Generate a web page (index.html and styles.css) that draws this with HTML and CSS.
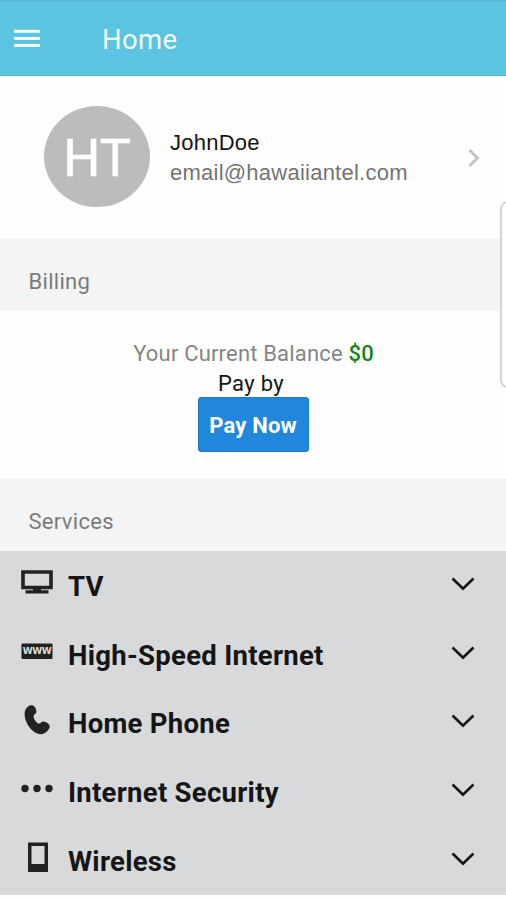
FILE: index.html
```html
<!DOCTYPE html>
<html lang="en">
<head>
<meta charset="utf-8">
<title>Home</title>
<link rel="stylesheet" href="styles.css">
</head>
<body>
<div class="screen">
  <header class="topbar">
    <svg class="menu" width="26" height="19" viewBox="0 0 26 19"><path d="M0 2.300h26M0 9.500h26M0 16.600h26"/></svg>
    <h1 class="title">Home</h1>
  </header>
  <section class="profile">
    <div class="avatar"><span>HT</span></div>
    <div class="identity">
      <div class="name">JohnDoe</div>
      <div class="email">email@hawaiiantel.com</div>
    </div>
    <svg class="next" width="14" height="20" viewBox="0 0 14 20"><path d="M2.500 2l8 8-8 8"/></svg>
  </section>
  <h2 class="section-head"><span>Billing</span></h2>
  <section class="billing">
    <p class="balance">Your Current Balance <span class="amount">$0</span></p>
    <p class="payby">Pay by</p>
    <button class="pay">Pay Now</button>
  </section>
  <h2 class="section-head"><span>Services</span></h2>
  <ul class="services">
    <li class="service">
      <svg class="icon" width="32" height="34" viewBox="0 0 32 34"><path class="line" d="M2 6h28v15.500H2z"/><path d="M12 21.500h8v2.800h7.500v3.200H4.500v-3.200H12z"/></svg>
      <span class="label">TV</span>
      <svg class="chevron" width="24" height="16" viewBox="0 0 24 16"><path d="M1.500 2.500L12 12.700 22.500 2.500"/></svg>
    </li>
    <li class="service">
      <svg class="icon" width="32" height="34" viewBox="0 0 32 34"><rect x="0.500" y="8.500" width="31" height="15.500" rx="1"/><text x="1.800" y="19.400" textLength="29" lengthAdjust="spacing">WWW</text></svg>
      <span class="label">High-Speed Internet</span>
      <svg class="chevron" width="24" height="16" viewBox="0 0 24 16"><path d="M1.500 2.500L12 12.700 22.500 2.500"/></svg>
    </li>
    <li class="service">
      <svg class="icon" width="32" height="34" viewBox="0 0 32 34"><path d="M4.200 6.200C5.400 3.200 8.200 1 11 1.300c2.600.3 4.300 3.500 4.400 6.200.1 2.200-2.700 2.800-2.800 4.600-.1 2.600 2.300 6.400 4.800 7.400 2 .8 2.800-2.200 5-2 2.800.3 6 2.300 6.300 4.800.2 2.500-2.900 5.900-5.700 7.200-3.200 1.400-7.100.3-10-1.800C8.200 24.200 5 18.600 4 13.500c-.5-2.500-.6-5.200.2-7.300z"/></svg>
      <span class="label">Home Phone</span>
      <svg class="chevron" width="24" height="16" viewBox="0 0 24 16"><path d="M1.500 2.500L12 12.700 22.500 2.500"/></svg>
    </li>
    <li class="service">
      <svg class="icon" width="32" height="34" viewBox="0 0 32 34"><circle cx="4" cy="15.500" r="3.700"/><circle cx="16" cy="15.500" r="3.700"/><circle cx="28" cy="15.500" r="3.700"/></svg>
      <span class="label">Internet Security</span>
      <svg class="chevron" width="24" height="16" viewBox="0 0 24 16"><path d="M1.500 2.500L12 12.700 22.500 2.500"/></svg>
    </li>
    <li class="service">
      <svg class="icon" width="32" height="34" viewBox="0 0 32 34"><path fill-rule="evenodd" d="M7 .5h20v29.500H7zM10.500 4v18h13V4z"/></svg>
      <span class="label">Wireless</span>
      <svg class="chevron" width="24" height="16" viewBox="0 0 24 16"><path d="M1.500 2.500L12 12.700 22.500 2.500"/></svg>
    </li>
  </ul>
  <div class="edge-handle"></div>
</div>
</body>
</html>
```
FILE: styles.css
```css
* { box-sizing: border-box; }
body { margin: 0; background: #fff; }
.screen {
  position: relative;
  width: 506px;
  height: 900px;
  overflow: hidden;
  background: #fefefe;
  font-family: Roboto, "Liberation Sans", sans-serif;
  color: #151515;
}
h1, h2, p, ul { margin: 0; padding: 0; font-weight: 400; }
.topbar {
  display: flex;
  align-items: center;
  height: 76px;
  padding: 4px 0 0 14px;
  background: #5bc4e1;
  border-top: 1px solid #5cb5d0;
  border-bottom: 1px solid #55b5d0;
}
.menu { margin-top: -3px; }
.menu path { stroke: #f3fbfd; stroke-width: 3; }
.title { margin-left: 62px; font-size: 27.500px; line-height: 32px; letter-spacing: 0.4px; color: #f3fbfd; }
.profile { display: flex; align-items: center; height: 162px; padding: 0 25px 0 44px; }
.avatar {
  display: flex;
  align-items: center;
  justify-content: center;
  width: 106px;
  height: 101px;
  margin-top: -1px;
  padding-top: 3px;
  border-radius: 50%;
  background: #bcbcbc;
  color: #fff;
  font-size: 52px;
  -webkit-text-stroke: 0.6px #fff;
}
.identity { flex: 1; margin: 2px 0 0 20px; font-family: "Liberation Sans", Arial, sans-serif; font-size: 22px; line-height: 30px; letter-spacing: 0.24px; }
.email { color: #747474; }
.next { margin-top: 2px; }
.next path { fill: none; stroke: #c4c4c4; stroke-width: 3; }
.section-head { display: flex; align-items: center; height: 73px; padding: 14px 0 0 28.500px; background: #f4f4f4; font-size: 22px; color: #7b7b7b; letter-spacing: 0.3px; }
.billing { display: flex; flex-direction: column; align-items: center; height: 167px; padding-top: 28px; font-size: 22px; line-height: 30px; }
.balance { padding-left: 1px; color: #858585; letter-spacing: 0.18px; }
.amount { color: #16861c; font-weight: 500; }
.payby { padding-right: 4px; letter-spacing: 0.3px; }
.pay {
  width: 111px;
  height: 55px;
  margin: -2px 0 0;
  padding: 3px 0 0;
  border: 1px solid #1c79cc;
  border-radius: 3px;
  background: #2187dc;
  color: #fff;
  font: 700 22px/26px Roboto, sans-serif;
  letter-spacing: 0.2px;
}
.services { list-style: none; height: 344px; background: #d8d9db; display: grid; grid-template-rows: repeat(5, 1fr); }
.service { display: flex; align-items: center; padding: 0 31px 0 21px; }
.icon { margin-bottom: 4px; fill: #202322; }
.icon .line { fill: none; stroke: #202322; stroke-width: 3.6; }
.icon text { fill: #dedede; font: 700 9px "DejaVu Sans", sans-serif; }
.label { flex: 1; margin-left: 15px; padding-top: 3px; font-size: 27.500px; font-weight: 700; line-height: 32px; letter-spacing: 0.28px; }
.chevron { margin-bottom: 3px; }
.chevron path { fill: none; stroke: #151515; stroke-width: 2.7; }
.edge-handle { position: absolute; left: 500px; top: 201px; width: 20px; height: 187px; border: 2px solid #d0d5d5; border-radius: 8px; background: #fdfdfd; }
```
